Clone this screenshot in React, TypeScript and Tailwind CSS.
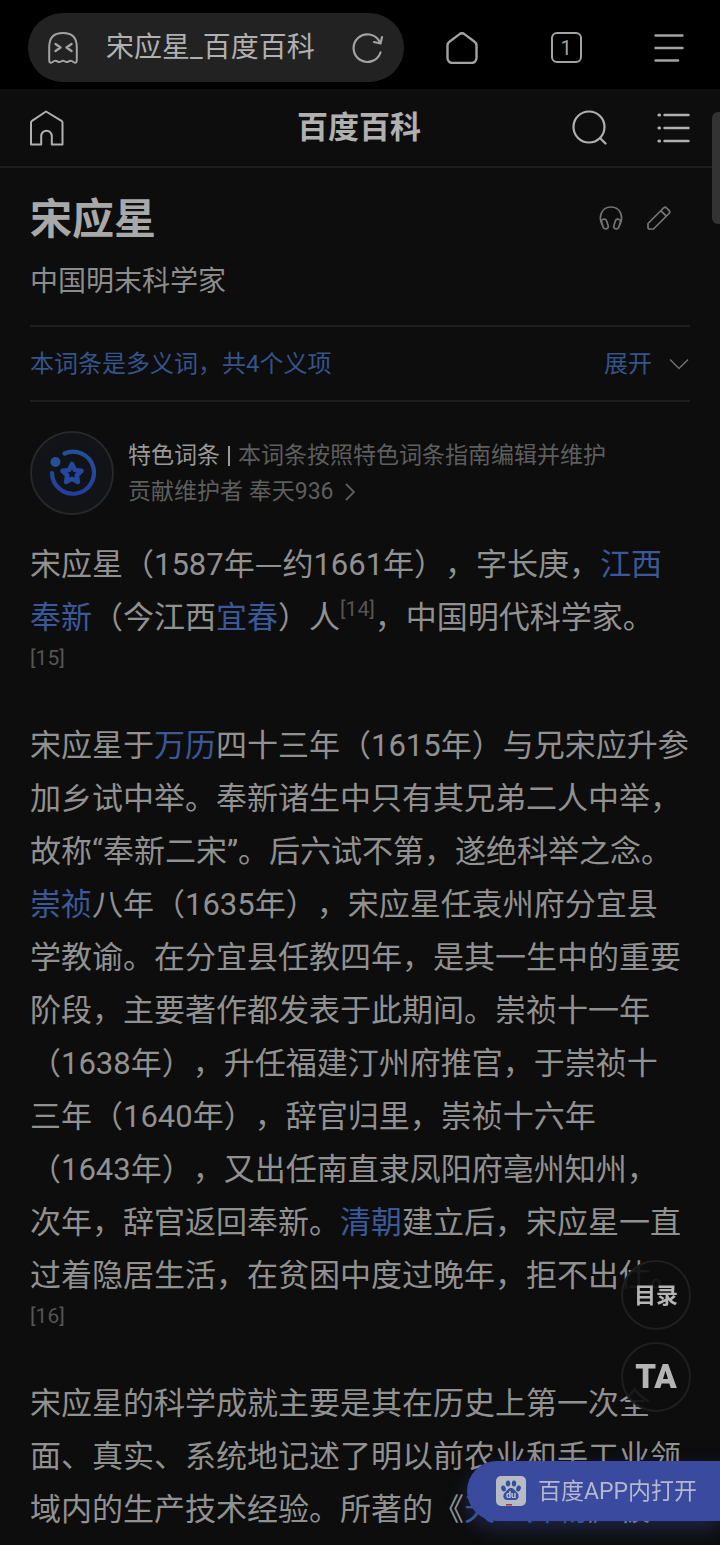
// App.tsx
import React from "react";

const Link: React.FC<{ children: React.ReactNode }> = ({ children }) => (
  <a href="#" className="text-[#3b5998]">{children}</a>
);

const Ref: React.FC<{ n: number }> = ({ n }) => (
  <sup className="-top-3 text-[21px] text-[#555555]">[{n}]</sup>
);

// reference that falls on a line of its own
const RefLine: React.FC<{ n: number }> = ({ n }) => (
  <sup className="top-0 block text-[21px] leading-7 text-[#555555]">[{n}]</sup>
);

const BrowserBar: React.FC = () => (
  <div className="flex h-[89px] items-center bg-black pt-[6px] pr-9 pb-0 pl-7 text-[#a3a3a3]">
    <div className="flex h-[69px] w-[376px] items-center rounded-full bg-[#222222] pr-5 pl-5">
      <button aria-label="隐私模式" className="shrink-0">
        <svg className="h-8 w-[30px]" viewBox="0 0 30 32" fill="none" stroke="currentColor" strokeWidth="2" strokeLinecap="round" strokeLinejoin="round">
          <path d="M1.200 15C1.200 5.500 6.500 1 15 1s13.800 4.500 13.800 14v13.500c0 2.400-1.600 2.700-3 1.700-1.700-1.300-3.300-2-5.100-.8-1.700 1.100-3.100.6-4-.1-1.100-.8-2.300-.8-3.400 0-.9.7-2.300 1.200-4 .1-1.800-1.200-3.400-.5-5.100.8-1.400 1-3 .7-3-1.700z" />
          <path d="M7.500 12l5 3.500-5 3.500M23.500 12l-5 3.500 5 3.500" strokeWidth="2.400" />
        </svg>
      </button>
      <span className="ml-7 flex-1 text-[28px] leading-10 text-[#b0b0b0]">宋应星_百度百科</span>
      <button aria-label="刷新" className="shrink-0">
        <svg className="h-8 w-8" viewBox="0 0 32 32" fill="none" stroke="currentColor" strokeWidth="2.200" strokeLinecap="round" strokeLinejoin="round">
          <path d="M28.500 20.500A13.800 13.800 0 1 1 27.500 9.500M30 5l-1.500 6.500-6.500-1.500" />
        </svg>
      </button>
    </div>
    <div className="ml-[42px] flex flex-1 items-center justify-between">
      <button aria-label="主页">
        <svg className="h-8 w-8" viewBox="0 0 32 32" fill="none" stroke="currentColor" strokeWidth="2.400" strokeLinejoin="round">
          <path d="M13.600 2.100a4 4 0 0 1 4.800 0L28.600 9.800A4.500 4.500 0 0 1 30.500 13.500V26a5 5 0 0 1-5 5h-19a5 5 0 0 1-5-5V13.500A4.500 4.500 0 0 1 3.400 9.800z" />
        </svg>
      </button>
      <button aria-label="标签页" className="flex h-[31px] w-[31px] items-center justify-center rounded-md border-2 border-[#a3a3a3] text-xl leading-6">
        1
      </button>
      <button aria-label="菜单">
        <svg className="h-7 w-[30px]" viewBox="0 0 30 28" fill="none" stroke="currentColor" strokeWidth="2.400" strokeLinecap="round">
          <path d="M1.500 1.500h27M1.500 14h27M1.500 26.500h22.500" />
        </svg>
      </button>
    </div>
  </div>
);

const SiteHeader: React.FC = () => (
  <header className="flex h-[79px] items-center justify-between border-b-2 border-[#1e1e1e] pr-[30px] pl-7 text-[#b0b0b0]">
    <div className="flex flex-1">
      <a href="#" aria-label="百科首页">
        <svg className="h-9 w-9" viewBox="0 0 36 36" fill="none" stroke="currentColor" strokeWidth="2" strokeLinejoin="round">
          <path d="M3 34.500V12.500Q3 11.500 4 10.800L18 1.500l15.500 9.300q1 .7 1 1.700v22h-10.700V26a5.300 5.300 0 0 0-10.600 0v8.500z" />
        </svg>
      </a>
    </div>
    <h1 className="text-[31px] leading-10 font-bold">百度百科</h1>
    <div className="flex flex-1 items-center justify-end gap-[49px]">
      <button aria-label="搜索">
        <svg className="h-[35px] w-[35px]" viewBox="0 0 35 35" fill="none" stroke="currentColor" strokeWidth="2.200" strokeLinecap="round">
          <circle cx="17" cy="17" r="15.500" />
          <path d="M28 28l5.500 5.500" />
        </svg>
      </button>
      <button aria-label="目录列表">
        <svg className="h-8 w-[34px]" viewBox="0 0 34 32" fill="none" stroke="currentColor" strokeWidth="2.400" strokeLinecap="round">
          <path d="M8.500 3h24M8.500 16h24M8.500 29h24" />
          <path d="M3 3h.5M3 16h.5M3 29h.5" strokeWidth="3.200" />
        </svg>
      </button>
    </div>
  </header>
);

const EntryTitle: React.FC = () => (
  <div className="border-b-2 border-[#1e1e1e] pt-5 pb-[21px]">
    <div className="flex items-center justify-between pr-[19px]">
      <h2 className="text-[42px] leading-[64px] font-bold text-[#a8a8a8]">宋应星</h2>
      <div className="mb-1 flex items-center gap-6 text-[#767676]">
        <button aria-label="收听">
          <svg className="h-6 w-6" viewBox="0 0 24 24" fill="none" stroke="currentColor" strokeWidth="1.700" strokeLinecap="round">
            <path d="M3 18.500C-1 10 3 1 12 1s13 9 9 17.500" />
            <rect x="3.300" y="13" width="5.200" height="10" rx="2.600" transform="rotate(-18 5.900 18)" />
            <rect x="15.500" y="13" width="5.200" height="10" rx="2.600" transform="rotate(18 18.100 18)" />
          </svg>
        </button>
        <button aria-label="编辑">
          <svg className="h-6 w-6" viewBox="0 0 24 24" fill="none" stroke="currentColor" strokeWidth="1.700" strokeLinejoin="round">
            <path d="M1 17.500L16.500 2a2.200 2.200 0 0 1 3.100 0l2.400 2.400a2.200 2.200 0 0 1 0 3.100L6.500 23H2.600A1.600 1.600 0 0 1 1 21.400zM13.800 4.700l5.500 5.500" />
          </svg>
        </button>
      </div>
    </div>
    <p className="pt-2 text-[28px] leading-[44px] text-[#8c8c8c]">中国明末科学家</p>
  </div>
);

const App: React.FC = () => {
  return (
    <div className="relative min-h-screen overflow-hidden bg-[#0d0d0d] font-[Roboto,'Noto_Sans_CJK_SC',sans-serif] [text-spacing-trim:space-all]">
      <BrowserBar />
      <SiteHeader />

      <main className="px-[30px] pb-2">
        <EntryTitle />

        <div className="flex h-[75px] items-center justify-between border-b-2 border-[#1e1e1e] text-2xl text-[#35548a]">
          <a href="#">本词条是多义词，共4个义项</a>
          <button className="flex items-center gap-4">
            展开
            <svg className="h-3 w-[22px] text-[#6e6e6e]" viewBox="0 0 22 12" fill="none" stroke="currentColor" strokeWidth="1.500">
              <path d="M2 1.500l9 9 9-9" />
            </svg>
          </button>
        </div>

        <section className="flex items-center gap-[14px] pt-[29px]">
          <div className="flex h-[84px] w-[84px] shrink-0 items-center justify-center rounded-full border-2 border-[#262729] bg-[#111316]">
            <svg className="h-12 w-12" viewBox="0 0 48 48" fill="none" strokeLinecap="round">
              <defs>
                <linearGradient id="badge" x1="0" y1="0" x2="0" y2="1">
                  <stop offset="0" stopColor="#24509a" />
                  <stop offset="1" stopColor="#233f9c" />
                </linearGradient>
              </defs>
              <path d="M16.500 4.500A21 21 0 1 1 4 24" stroke="url(#badge)" strokeWidth="4.200" />
              <circle cx="7.500" cy="13" r="5" fill="#24509a" />
              <path d="M24 15l2.900 6 6.600.9-4.800 4.600 1.200 6.500-5.900-3.200-5.900 3.200 1.200-6.500-4.800-4.600 6.600-.9z" stroke="#2447a0" strokeWidth="4.600" strokeLinejoin="round" />
            </svg>
          </div>
          <div className="pt-[2px] text-[23px] leading-9 text-[#5e5e5e]">
            <p className="flex items-center gap-2">
              <span className="text-[#999999]">特色词条</span>
              <span className="h-5 w-[2px] bg-[#999999]"></span>
              <span>本词条按照特色词条指南编辑并维护</span>
            </p>
            <a href="#" className="flex items-center gap-3">
              贡献维护者 奉天936
              <svg className="h-[18px] w-[10px]" viewBox="0 0 10 18" fill="none" stroke="currentColor" strokeWidth="1.800">
                <path d="M1 1l8 8-8 8" />
              </svg>
            </a>
          </div>
        </section>

        <article className="space-y-[47px] pt-5 text-[31px] leading-[53px] whitespace-nowrap text-[#919191]">
          <p>
            宋应星（1587年<span className="font-['Noto_Sans_CJK_SC']">—</span>约1661年），字长庚，<Link>江西</Link><br />
            <Link>奉新</Link>（今江西<Link>宜春</Link>）人<Ref n={14} />，中国明代科学家。<br />
            <RefLine n={15} />
          </p>
          <p>
            宋应星于<Link>万历</Link>四十三年（1615年）与兄宋应升参<br />
            加乡试中举。奉新诸生中只有其兄弟二人中举，<br />
            故称“奉新二宋”。后六试不第，遂绝科举之念。<br />
            <Link>崇祯</Link>八年（1635年），宋应星任袁州府分宜县<br />
            学教谕。在分宜县任教四年，是其一生中的重要<br />
            阶段，主要著作都发表于此期间。崇祯十一年<br />
            （1638年），升任福建汀州府推官，于崇祯十<br />
            三年（1640年），辞官归里，崇祯十六年<br />
            （1643年），又出任南直隶凤阳府亳州知州，<br />
            次年，辞官返回奉新。<Link>清朝</Link>建立后，宋应星一直<br />
            过着隐居生活，在贫困中度过晚年，拒不出仕。<br />
            <RefLine n={16} />
          </p>
          <p>
            宋应星的科学成就主要是其在历史上第一次全<br />
            面、真实、系统地记述了明以前农业和手工业领<br />
            域内的生产技术经验。所著的《<Link>天工开物</Link>》被
          </p>
        </article>
      </main>

      {/* Scroll thumb */}
      <div className="absolute top-28 right-0 h-28 w-2 rounded-l-md bg-[#333333]"></div>

      {/* Floating buttons */}
      <div className="fixed right-[29px] bottom-[133px] flex flex-col gap-3 text-[#b5b5b5]">
        <button className="h-[70px] w-[70px] rounded-full border-2 border-[#1f1f1f] bg-[#0d0d0d]/90 text-[22px] font-bold">目录</button>
        <button className="h-[70px] w-[70px] rounded-full border-2 border-[#1f1f1f] bg-[#0d0d0d]/90 text-[33px] leading-9 font-black">TA</button>
      </div>

      <a href="#" className="fixed right-0 bottom-6 flex h-[60px] items-center gap-3 rounded-l-full bg-[#3a4a9f] pr-[23px] pl-[29px] text-[23px] text-[#b4b8cc] shadow-[0_8px_20px_rgba(58,74,159,0.4)]">
        <svg className="h-[30px] w-[30px]" viewBox="0 0 30 30">
          <rect width="30" height="30" rx="5" fill="#b9bbc4" />
          <g fill="#3350a0">
            <ellipse cx="7.500" cy="12.500" rx="2.300" ry="3" transform="rotate(-15 7.500 12.500)" />
            <ellipse cx="12" cy="7.500" rx="2.200" ry="3" />
            <ellipse cx="18" cy="7.500" rx="2.200" ry="3" />
            <ellipse cx="22.500" cy="12.500" rx="2.300" ry="3" transform="rotate(15 22.500 12.500)" />
            <path d="M15 12c3 0 3.800 2.500 6 4.600 2.800 2.700 2 7.400-2.200 7.400h-7.600C7 24 6.200 19.300 9 16.600c2.200-2.100 3-4.600 6-4.600z" />
          </g>
          <text x="15" y="22" textAnchor="middle" fontSize="9" fontWeight="700" fill="#c8cad2">du</text>
          <path d="M10 28.800h6" stroke="#a83a3a" strokeWidth="1.600" />
        </svg>
        <span className="pt-[2px]">百度APP内打开</span>
      </a>
    </div>
  );
};

export default App;
